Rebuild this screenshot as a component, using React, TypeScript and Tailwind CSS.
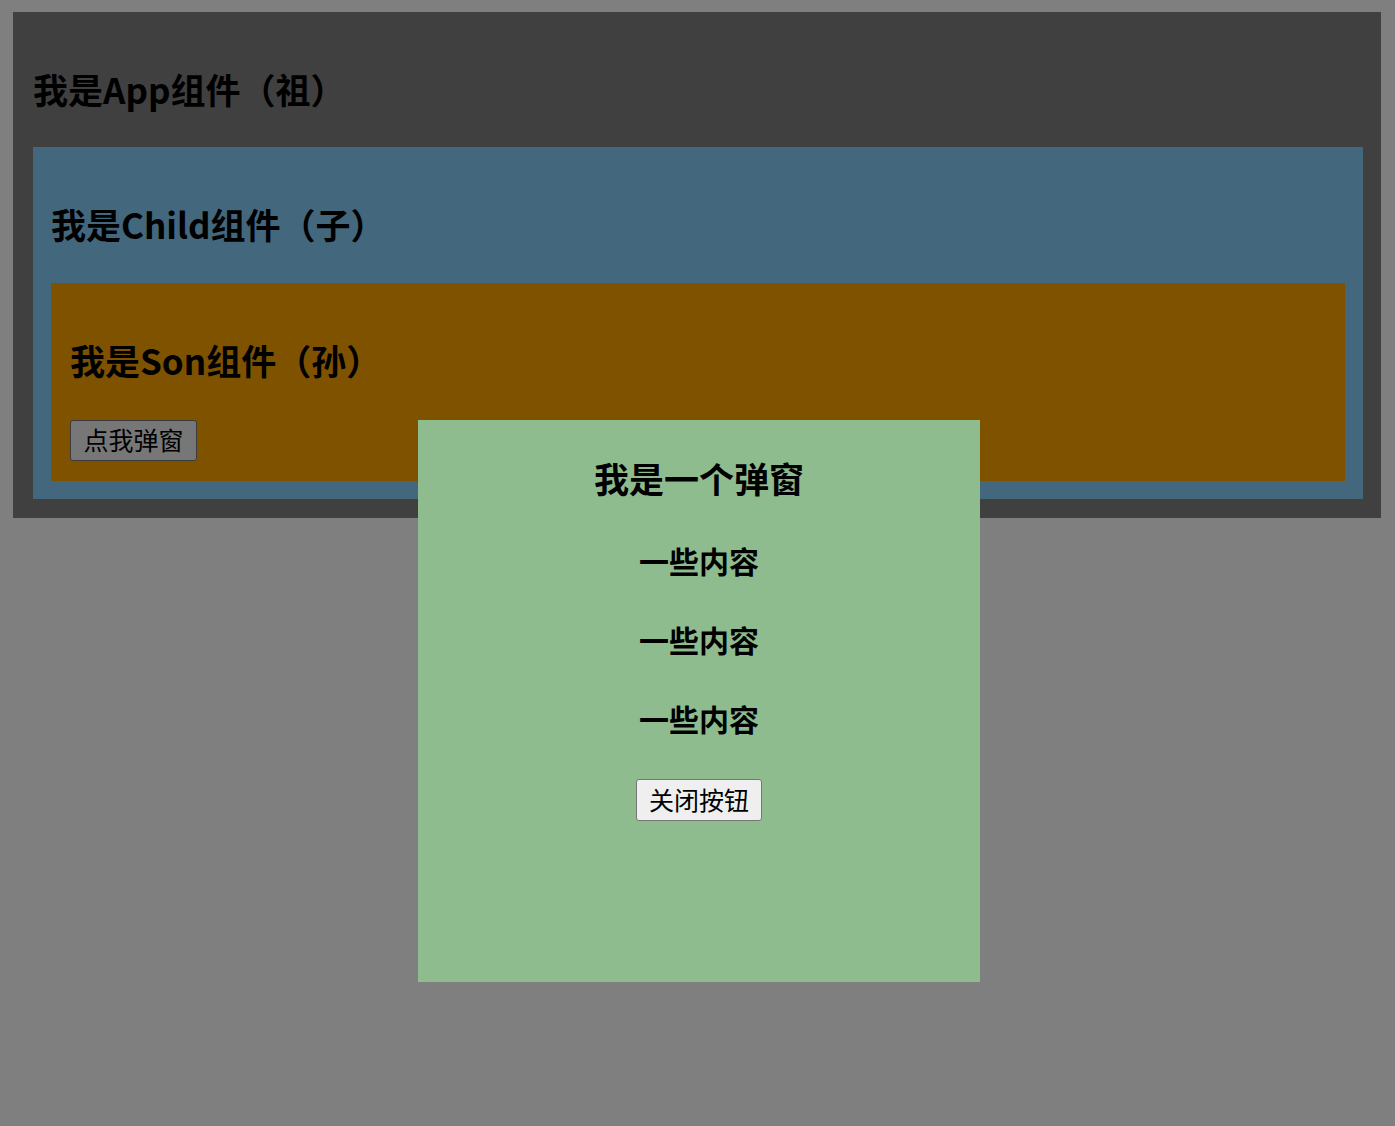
import React, { useState } from 'react';

const font = { fontFamily: '"Noto Sans CJK SC", "Noto Sans", sans-serif' };

const Heading: React.FC<{ children: React.ReactNode; className?: string }> = ({ children, className }) => (
  <h2 className={`text-[35px] font-bold leading-[48px] mt-[33px] text-black ${className}`}>{children}</h2>
);

const Modal: React.FC<{ onClose: () => void }> = ({ onClose }) => (
  <>
    <div className="fixed inset-0 bg-black/50" />
    <div className="fixed left-[418px] top-[420px] w-[562px] h-[562px] bg-[#8fbc8f] flex flex-col items-center pt-[34px] text-black">
      <h2 className="text-[35px] font-bold leading-[48px]">我是一个弹窗</h2>
      <h3 className="text-[30px] font-bold leading-[40px] mt-[38px]">一些内容</h3>
      <h3 className="text-[30px] font-bold leading-[40px] mt-[39px]">一些内容</h3>
      <h3 className="text-[30px] font-bold leading-[40px] mt-[39px]">一些内容</h3>
      <button
        onClick={onClose}
        className="mt-[41px] h-[42px] w-[126px] text-[25px] leading-none pb-[2px] bg-[#efefef] border border-[#767676] rounded-[3px] text-black"
      >
        关闭按钮
      </button>
    </div>
  </>
);

const App: React.FC = () => {
  const [open, setOpen] = useState(true);

  return (
    <div className="min-h-screen bg-white pt-[12px] pl-[13px] pb-[12px]" style={font}>
      <div className="w-[1368px] bg-[#808080] pt-[20px] pl-[20px] pr-[18px] pb-[19px]">
        <Heading className="mb-[34px]">我是App组件（祖）</Heading>
        <div className="bg-[#87cefa] pt-[20px] pl-[18px] pr-[18px] pb-[18px]">
          <Heading className="mb-[35px]">我是Child组件（子）</Heading>
          <div className="bg-[#ffa500] pt-[20px] pl-[19px] pr-[18px] pb-[20px]">
            <Heading className="mb-[36px]">我是Son组件（孙）</Heading>
            <button
              onClick={() => setOpen(true)}
              className="h-[41px] w-[127px] text-[25px] leading-none pb-[2px] bg-[#efefef] border border-[#767676] rounded-[3px] text-black"
            >
              点我弹窗
            </button>
          </div>
        </div>
      </div>
      {open && <Modal onClose={() => setOpen(false)} />}
    </div>
  );
};

export default App;
